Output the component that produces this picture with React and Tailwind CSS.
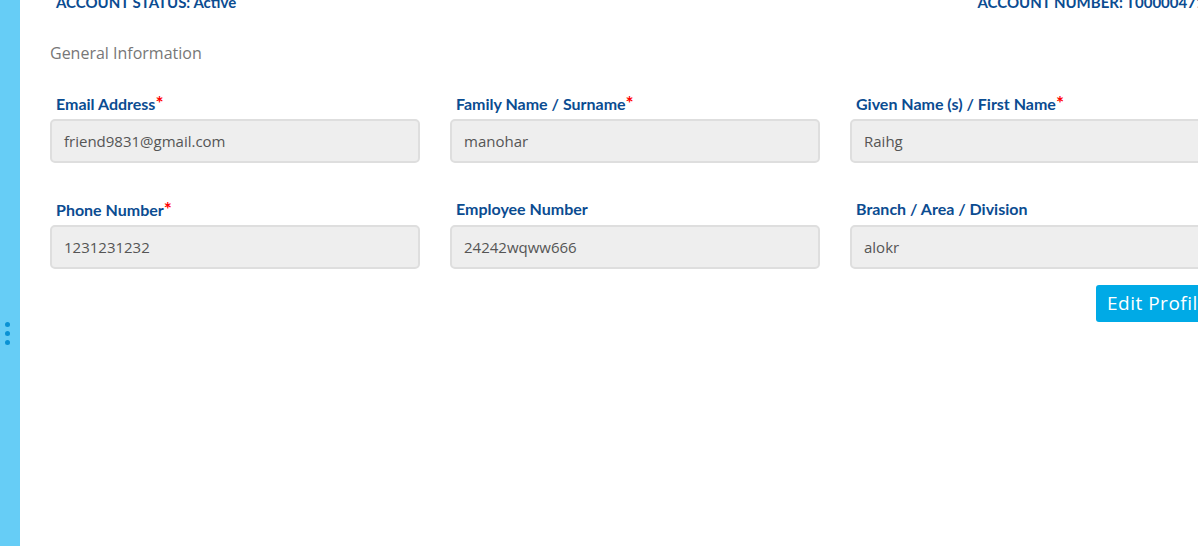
export default function App() {
  const rows = [
    [
      { label: "Email Address", req: true, value: "friend9831@gmail.com" },
      { label: "Family Name / Surname", req: true, value: "manohar" },
      { label: "Given Name (s) / First Name", req: true, value: "Raihg" },
    ],
    [
      { label: "Phone Number", req: true, value: "1231231232" },
      { label: "Employee Number", req: false, value: "24242wqww666" },
      { label: "Branch / Area / Division", req: false, value: "alokr" },
    ],
  ];
  return (
    <div className="w-[1198px] h-[546px] overflow-hidden flex bg-white">
      <div className="w-[20px] shrink-0 h-full bg-[#66cdf6] flex flex-col items-start pl-[5px] justify-center gap-[4px] pt-[120px]">
        <span className="w-[5px] h-[5px] rounded-full bg-[#0a92d4]" />
        <span className="w-[5px] h-[5px] rounded-full bg-[#0a92d4]" />
        <span className="w-[5px] h-[5px] rounded-full bg-[#0a92d4]" />
      </div>
      <div className="shrink-0 w-[1196px] ml-[30px] flex flex-col">
        <div className="flex justify-between mt-[-9px] h-[22px] leading-[22px] font-['Lato',sans-serif] font-bold text-[15px] text-[#0b4c91] pl-[6px]">
          <span>ACCOUNT STATUS: Active</span>
          <span className="pr-[24px]">ACCOUNT NUMBER: T0000047123</span>
        </div>
        <div className="mt-[29px] h-[22px] leading-[22px] font-['Open_Sans',sans-serif] text-[16px] text-[#777]">
          General Information
        </div>
        <div className="mt-[29px] flex flex-col gap-[36px]">
          {rows.map((row, i) => (
            <div key={i} className="grid grid-cols-[370px_370px_370px] gap-[30px]">
              {row.map((f) => (
                <div key={f.label} className="flex flex-col">
                  <div className="h-[22px] leading-[20px] pl-[6px] font-['Lato',sans-serif] font-bold text-[16px] text-[#0b4c91] whitespace-nowrap">
                    {f.label}
                    {f.req && <span className="text-[#ff0000] text-[19px] leading-[20px]">*</span>}
                  </div>
                  <div className="mt-[4px] h-[44px] rounded-[5px] border-2 border-[#dedede] bg-[#eeeeee] flex items-center pl-[12px] font-['Open_Sans',sans-serif] text-[15px] text-[#555]">
                    {f.value}
                  </div>
                </div>
              ))}
            </div>
          ))}
        </div>
        <div className="mt-[16px] flex justify-end">
          <button className="h-[37px] w-[150px] rounded-[3px] bg-[#00aae6] text-white font-['Open_Sans',sans-serif] text-[19px] tracking-[0.5px] text-left pl-[11px]">
            Edit Profile
          </button>
        </div>
      </div>
    </div>
  );
}
